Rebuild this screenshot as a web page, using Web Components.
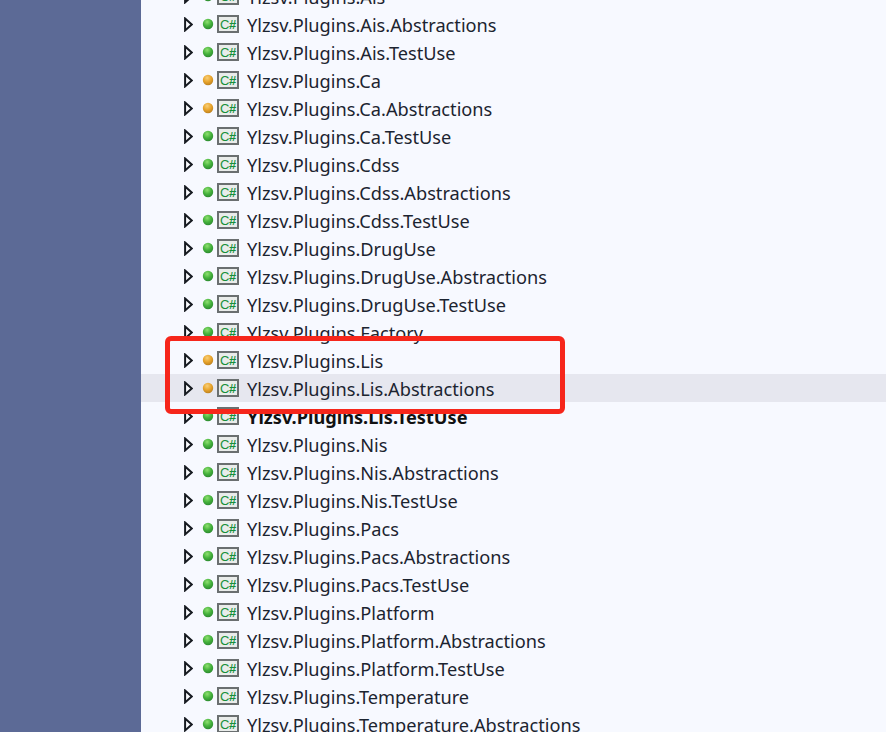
<!DOCTYPE html>
<html>
<head>
<meta charset="utf-8">
<style>
    html, body { margin: 0; height: 100%; overflow: hidden; background: #f7f9ff; }
</style>
</head>
<body>
<solution-page>
    <project-row name="Ylzsv.Plugins.Ais"></project-row>
    <project-row name="Ylzsv.Plugins.Ais.Abstractions"></project-row>
    <project-row name="Ylzsv.Plugins.Ais.TestUse"></project-row>
    <project-row name="Ylzsv.Plugins.Ca" status="warn"></project-row>
    <project-row name="Ylzsv.Plugins.Ca.Abstractions" status="warn"></project-row>
    <project-row name="Ylzsv.Plugins.Ca.TestUse"></project-row>
    <project-row name="Ylzsv.Plugins.Cdss"></project-row>
    <project-row name="Ylzsv.Plugins.Cdss.Abstractions"></project-row>
    <project-row name="Ylzsv.Plugins.Cdss.TestUse"></project-row>
    <project-row name="Ylzsv.Plugins.DrugUse"></project-row>
    <project-row name="Ylzsv.Plugins.DrugUse.Abstractions"></project-row>
    <project-row name="Ylzsv.Plugins.DrugUse.TestUse"></project-row>
    <project-row name="Ylzsv.Plugins.Factory"></project-row>
    <project-row name="Ylzsv.Plugins.Lis" status="warn"></project-row>
    <project-row name="Ylzsv.Plugins.Lis.Abstractions" status="warn" selected></project-row>
    <project-row name="Ylzsv.Plugins.Lis.TestUse" bold></project-row>
    <project-row name="Ylzsv.Plugins.Nis"></project-row>
    <project-row name="Ylzsv.Plugins.Nis.Abstractions"></project-row>
    <project-row name="Ylzsv.Plugins.Nis.TestUse"></project-row>
    <project-row name="Ylzsv.Plugins.Pacs"></project-row>
    <project-row name="Ylzsv.Plugins.Pacs.Abstractions"></project-row>
    <project-row name="Ylzsv.Plugins.Pacs.TestUse"></project-row>
    <project-row name="Ylzsv.Plugins.Platform"></project-row>
    <project-row name="Ylzsv.Plugins.Platform.Abstractions"></project-row>
    <project-row name="Ylzsv.Plugins.Platform.TestUse"></project-row>
    <project-row name="Ylzsv.Plugins.Temperature"></project-row>
    <project-row name="Ylzsv.Plugins.Temperature.Abstractions"></project-row>
</solution-page>
<script>
const page_template = document.createElement('template');
page_template.innerHTML = `
<style>
    :host {
        display: flex;
        position: relative;
        width: 886px;
        height: 732px;
        overflow: hidden;
        background: #f7f9ff;
    }
    #side {
        flex: 0 0 141px;
        background: #5c6a96;
    }
    #tree {
        flex: 1;
        display: flex;
        flex-direction: column;
        margin-top: -18px;
    }
    /* the red mark someone drew over the screenshot */
    #mark {
        position: absolute;
        left: 165px;
        top: 336px;
        width: 400px;
        height: 78px;
        box-sizing: border-box;
        border: 5px solid #f6261b;
        border-radius: 6px;
    }
</style>
<div id="side"></div>
<div id="tree"><slot></slot></div>
<div id="mark"></div>
`;
class SolutionPage extends HTMLElement {
    constructor() {
        super();
        this.attachShadow({ mode: 'open' });
        this.shadowRoot.appendChild(page_template.content.cloneNode(true));
    }
}
customElements.define('solution-page', SolutionPage);

const row_template = document.createElement('template');
row_template.innerHTML = `
<style>
    :host {
        display: flex;
        align-items: center;
        flex: 0 0 28px;
        height: 28px;
        padding-left: 43px;
        font-family: "Noto Sans", sans-serif;
        font-size: 18.2px;
        color: #1c2430;
    }
    :host([selected]) { background: #e6e7ef; }
    :host([bold]) { font-weight: 700; color: #111; }
    svg { display: block; flex: none; }
    #arrow { margin-right: 9px; }
    #ball { margin-right: 3px; }
    #name { margin-left: 8px; padding-top: 2px; white-space: nowrap; line-height: 28px; }
</style>
<svg id="arrow" width="9" height="15" viewBox="0 0 9 15">
    <path d="M1.1 1.6 L7.7 7.5 L1.1 13.4 Z" fill="#fbfcff" stroke="#161a20" stroke-width="2" stroke-linejoin="miter"/>
</svg>
<svg id="ball" width="12" height="12" viewBox="0 0 12 12">
    <defs>
        <radialGradient id="g" cx="42%" cy="30%" r="72%">
            <stop id="s1" offset="0"/>
            <stop id="s2" offset="0.55"/>
            <stop id="s3" offset="1"/>
        </radialGradient>
    </defs>
    <circle cx="6" cy="6" r="5.2" fill="url(#g)"/>
</svg>
<c-sharp-icon></c-sharp-icon>
<span id="name"></span>
`;
class ProjectRow extends HTMLElement {
    constructor() {
        super();
        this.attachShadow({ mode: 'open' });
        this.shadowRoot.appendChild(row_template.content.cloneNode(true));
    }
    connectedCallback() {
        const root = this.shadowRoot;
        root.querySelector('#name').textContent = this.getAttribute('name');
        const colors = this.getAttribute('status') === 'warn'
            ? ['#f8cf78', '#e8a42c', '#bb801f']
            : ['#8fe070', '#45b23c', '#2c8a30'];
        root.querySelector('#s1').setAttribute('stop-color', colors[0]);
        root.querySelector('#s2').setAttribute('stop-color', colors[1]);
        root.querySelector('#s3').setAttribute('stop-color', colors[2]);
    }
}
customElements.define('project-row', ProjectRow);

const icon_template = document.createElement('template');
icon_template.innerHTML = `
<style>
    :host {
        display: flex;
        align-items: center;
        justify-content: center;
        box-sizing: border-box;
        width: 22px;
        height: 18px;
        background: #e9ecea;
        border: 2px solid #6a6f70;
        font-family: "Liberation Sans", sans-serif;
        font-size: 13px;
        font-weight: 700;
        letter-spacing: -0.2px;
        color: #17903a;
    }
    b { font-weight: 400; }
</style>
<span><b>C</b>#</span>
`;
class CSharpIcon extends HTMLElement {
    constructor() {
        super();
        this.attachShadow({ mode: 'open' });
        this.shadowRoot.appendChild(icon_template.content.cloneNode(true));
    }
}
customElements.define('c-sharp-icon', CSharpIcon);
</script>
</body>
</html>
